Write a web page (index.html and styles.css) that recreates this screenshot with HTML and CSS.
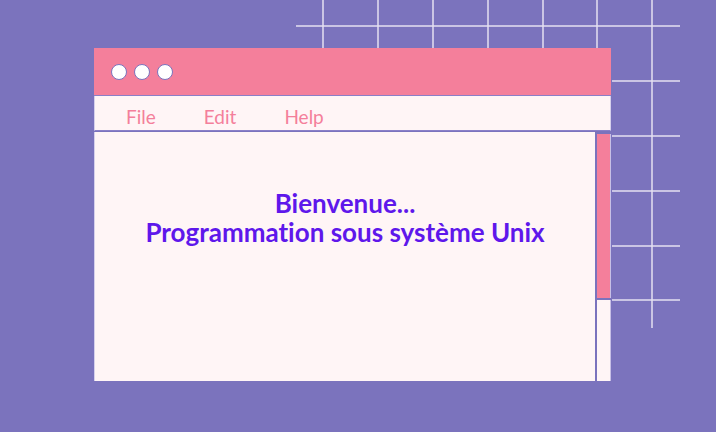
FILE: index.html
```html
<!DOCTYPE html>
<html lang="fr">
<head>
<meta charset="utf-8">
<title>Bienvenue</title>
<link rel="stylesheet" href="styles.css">
</head>
<body>
<svg class="grid" width="716" height="432" viewBox="0 0 716 432" aria-hidden="true">
  <g stroke="#e4e0f2" stroke-width="1.5">
    <line x1="323" y1="0" x2="323" y2="48"/>
    <line x1="378" y1="0" x2="378" y2="48"/>
    <line x1="433" y1="0" x2="433" y2="48"/>
    <line x1="488" y1="0" x2="488" y2="48"/>
    <line x1="543" y1="0" x2="543" y2="48"/>
    <line x1="597" y1="0" x2="597" y2="48"/>
    <line x1="652" y1="0" x2="652" y2="328"/>
    <line x1="296" y1="26" x2="680" y2="26"/>
    <line x1="612" y1="81" x2="680" y2="81"/>
    <line x1="612" y1="136" x2="680" y2="136"/>
    <line x1="612" y1="191" x2="680" y2="191"/>
    <line x1="612" y1="246" x2="680" y2="246"/>
    <line x1="612" y1="300" x2="680" y2="300"/>
  </g>
</svg>
<div class="window">
  <div class="titlebar">
    <span class="dot"></span>
    <span class="dot"></span>
    <span class="dot"></span>
  </div>
  <nav class="menu">
    <span class="menu-item">File</span>
    <span class="menu-item">Edit</span>
    <span class="menu-item">Help</span>
  </nav>
  <div class="body">
    <div class="content">
      <p class="heading">Bienvenue...<br>Programmation sous système Unix</p>
    </div>
    <div class="scrollbar">
      <div class="thumb"></div>
      <div class="track"></div>
    </div>
  </div>
</div>
</body>
</html>
```
FILE: styles.css
```css
html, body {
  margin: 0;
  padding: 0;
}
body {
  width: 716px;
  height: 432px;
  background: #7b73bd;
  overflow: hidden;
  position: relative;
  font-family: Lato, "Liberation Sans", sans-serif;
  padding-top: 48px;
  padding-left: 94px;
  box-sizing: border-box;
}
.grid {
  position: absolute;
  left: 0;
  top: 0;
  z-index: 0;
}
.window {
  position: relative;
  z-index: 1;
  width: 517px;
  height: 333px;
  display: flex;
  flex-direction: column;
}
.titlebar {
  height: 48px;
  box-sizing: border-box;
  background: #f47f9b;
  border-bottom: 1px solid #8a7fc8;
  display: flex;
  align-items: center;
  gap: 7px;
  padding-left: 17px;
}
.dot {
  width: 16px;
  height: 16px;
  border-radius: 50%;
  background: #fff;
  border: 1.5px solid #7b73bd;
  box-sizing: border-box;
}
.menu {
  height: 35px;
  box-sizing: border-box;
  background: #fff5f6;
  border-bottom: 1.5px solid #8a80c8;
  border-right: 1px solid #d6d0ec;
  border-left: 1px solid #d6d0ec;
  display: flex;
  align-items: center;
  padding-left: 31px;
  gap: 48px;
}
.menu-item {
  color: #f47f9b;
  font-size: 19px;
  line-height: 1;
  padding-top: 6px;
}
.body {
  flex: 1;
  display: flex;
  gap: 2px;
  padding-top: 1px;
}
.content {
  flex: 1;
  background: #fff5f6;
  border-left: 1px solid #d6d0ec;
  display: flex;
  justify-content: center;
}
.heading {
  margin: 0;
  padding-top: 57px;
  text-align: center;
  color: #5e17eb;
  font-weight: 700;
  font-size: 26px;
  line-height: 29px;
  font-variant-ligatures: none;
}
.scrollbar {
  width: 14px;
  display: flex;
  flex-direction: column;
  gap: 2px;
  padding-top: 2px;
}
.thumb {
  height: 164px;
  background: #f47f9b;
  border-right: 1px solid #c7bfe6;
}
.track {
  flex: 1;
  background: #fff5f6;
  border-right: 1px solid #c7bfe6;
}
```
